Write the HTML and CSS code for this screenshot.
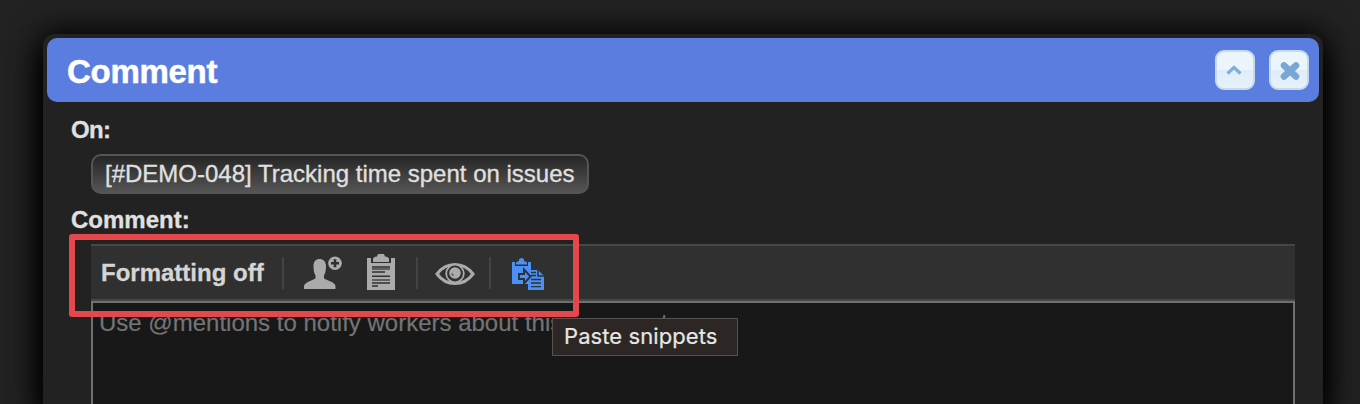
FILE: index.html
```html
<!DOCTYPE html>
<html lang="en">
<head>
<meta charset="utf-8">
<title>Comment</title>
<link rel="stylesheet" href="styles.css">
</head>
<body>
<div class="dialog">
  <header class="titlebar">
    <h1 class="title">Comment</h1>
    <div class="actions">
      <button class="action" aria-label="Collapse"><svg width="36" height="36" viewBox="0 0 36 36"><path d="M10.500 21.500 17 15.500l6.500 6" fill="none" stroke="#82afd7" stroke-width="3.200"/></svg></button>
      <button class="action" aria-label="Close"><svg width="36" height="36" viewBox="0 0 36 36"><path d="M13 13.500 25 24.500M25 13.500 13 24.500" fill="none" stroke="#78a7d3" stroke-width="6.600" stroke-linecap="round"/></svg></button>
    </div>
  </header>
  <main class="form">
    <div class="label"><span class="label-on">On:</span></div>
    <div class="bubble">[#DEMO-048] Tracking time spent on issues</div>
    <div class="label">Comment:</div>
    <div class="editor">
      <div class="toolbar">
        <span class="format">Formatting off</span>
        <i class="sep"></i>
        <svg class="icon icon-user" width="38" height="34" viewBox="0 0 38 34"><path d="M9.500 10C9.500 5.500 12 3 15.500 3s6.500 2.500 6.500 7c0 4-.5 7-2 9.500v3c3 2 8 3 10.500 5.500 1.300 1.500 1 3.500 1 5H0c0-2-.3-3.500 1-5 3-2.500 7-3.500 10.500-5.500v-3C10 17 9.500 14 9.500 10z" fill="#ababab"/><circle cx="31" cy="7.300" r="6.800" fill="#ababab"/><path d="M31 3.300v8M27 7.300h8" stroke="#303030" stroke-width="2.600"/></svg>
        <svg class="icon icon-board" width="28" height="36" viewBox="0 0 28 36"><path d="M0 4h4v5h20V4h4v32H0z" fill="#ababab"/><path d="M6 8V5q0-2 4-2.500L11 0h6l1 2.500q4 .5 4 2.500v3z" fill="#ababab"/><path d="M5 13h18M5 18h13M5 22.300h18M5 29h18M5 32h6" stroke="#303030" stroke-width="1.500"/><path d="M5 15h18M5 26h18" stroke="#606060" stroke-width="1.800"/></svg>
        <i class="sep"></i>
        <svg class="icon icon-eye" width="40" height="24" viewBox="0 0 40 24"><path d="M2 12Q9 2.500 20 2.500T38 12Q31 21.500 20 21.500T2 12z" fill="#303030" stroke="#ababab" stroke-width="3"/><circle cx="20" cy="11.500" r="8.800" fill="#303030" stroke="#ababab" stroke-width="1.800"/><circle cx="20" cy="11" r="5.800" fill="#ababab"/><path d="M17 11.500q.2 1.800 1.500 1.700" fill="none" stroke="#303030" stroke-width="1.100"/></svg>
        <i class="sep"></i>
        <svg class="icon icon-paste" width="32" height="32" viewBox="0 0 32 32"><path d="M0 4h3v4h13V4h3v22H0z" fill="#4a90f5"/><path d="M4 6.500V5q0-1.500 3-2V1.500Q7.500 0 9.500 0T12 1.500V3q3 .5 3 2v1.500z" fill="#4a90f5"/><path d="M16 12h10l6 6v14H16z" fill="#4a90f5"/><path d="M26 12v6h6" fill="none" stroke="#303030" stroke-width="1.500"/><path d="M19 14.500h5M19 17.500h5M19 21.500h10M19 25h10M19 28.700h10" stroke="#303030" stroke-width="1.300"/><path d="M7 16h5v-4.500l6.500 7-6.500 7V21H7z" fill="#4a90f5" stroke="#303030" stroke-width="1.900"/></svg>
      </div>
      <div class="textarea">Use @mentions to notify workers about this comment</div>
      <div class="highlight"></div>
      <div class="tooltip">Paste snippets</div>
    </div>
  </main>
</div>
</body>
</html>
```
FILE: styles.css
```css
* { box-sizing: border-box; }
body {
  margin: 0;
  height: 404px;
  padding: 34px 37px 0 43px;
  background: #222;
  color: #e0e0e0;
  font: 24px/28px "Liberation Sans", Arial, sans-serif;
  overflow: hidden;
}
.dialog {
  height: 370px;
  padding: 4px;
  border-radius: 12px 12px 0 0;
  background: #222;
  box-shadow: 0 0 30px 2px #000, 0 20px 30px 2px #000;
}
.titlebar {
  display: flex;
  align-items: center;
  justify-content: space-between;
  height: 64px;
  padding: 0 10px 0 20px;
  border-radius: 10px;
  background: #5c7de0;
}
.title {
  margin: 0;
  padding-top: 4px;
  color: #fff;
  font-size: 33px;
  line-height: 38px;
  letter-spacing: -.3px;
  -webkit-text-stroke: .5px #fff;
}
.actions { display: flex; gap: 14px; }
.action {
  width: 40px;
  height: 40px;
  padding: 0;
  border: 2px solid #c5dbec;
  border-radius: 9px;
  background: linear-gradient(#edf5fc 50%, #dfecf8 50%, #e7f1fa);
}
.action svg { display: block; }
.form { padding: 14px 24px 0; }
.label {
  height: 28px;
  font-weight: bold;
  white-space: nowrap;
  -webkit-text-stroke: .3px;
}
.label-on { letter-spacing: -.7px; }
.bubble {
  display: flex;
  align-items: center;
  width: 498px;
  height: 40px;
  margin: 10px 0 12px 20px;
  padding-left: 12px;
  border: 2px solid #555;
  border-radius: 10px;
  background: linear-gradient(#232323, #575757) border-box;
  white-space: nowrap;
  -webkit-text-stroke: .3px;
}
.editor {
  position: relative;
  width: 1204px;
  margin: 10px 0 0 20px;
}
.toolbar {
  display: flex;
  align-items: center;
  height: 57px;
  padding-left: 10px;
  border: solid #464646;
  border-width: 2px 0;
  background: #303030;
}
.format {
  width: 181px;
  color: #d5d5d5;
  font-weight: bold;
  white-space: nowrap;
  -webkit-text-stroke: .3px;
}
.sep { width: 2px; height: 32px; background: #444; }
.icon { flex: none; }
.icon-user { margin: 0 25px 0 20px; }
.icon-board { margin: 0 21px 2px 0; }
.icon-eye { margin: 2px 14px 0 17px; }
.icon-paste { margin: 3px 0 0 21px; }
.textarea {
  height: 103px;
  padding: 6px;
  border: 2px solid #707070;
  border-bottom: 0;
  background: #181818;
  color: #747474;
  white-space: nowrap;
  -webkit-text-stroke: .2px;
}
.highlight {
  position: absolute;
  left: -22px;
  top: -10px;
  width: 510px;
  height: 83px;
  border: 6px solid #e5484c;
  border-radius: 3px;
}
.tooltip {
  position: absolute;
  left: 461px;
  top: 74px;
  width: 186px;
  height: 38px;
  padding: 3px 11px;
  border: 1px solid #565250;
  background: #2c2624;
  color: #e8e6e5;
  font: 22px/29px Inter, sans-serif;
  letter-spacing: .08px;
  white-space: nowrap;
  -webkit-text-stroke: .2px;
}
```
